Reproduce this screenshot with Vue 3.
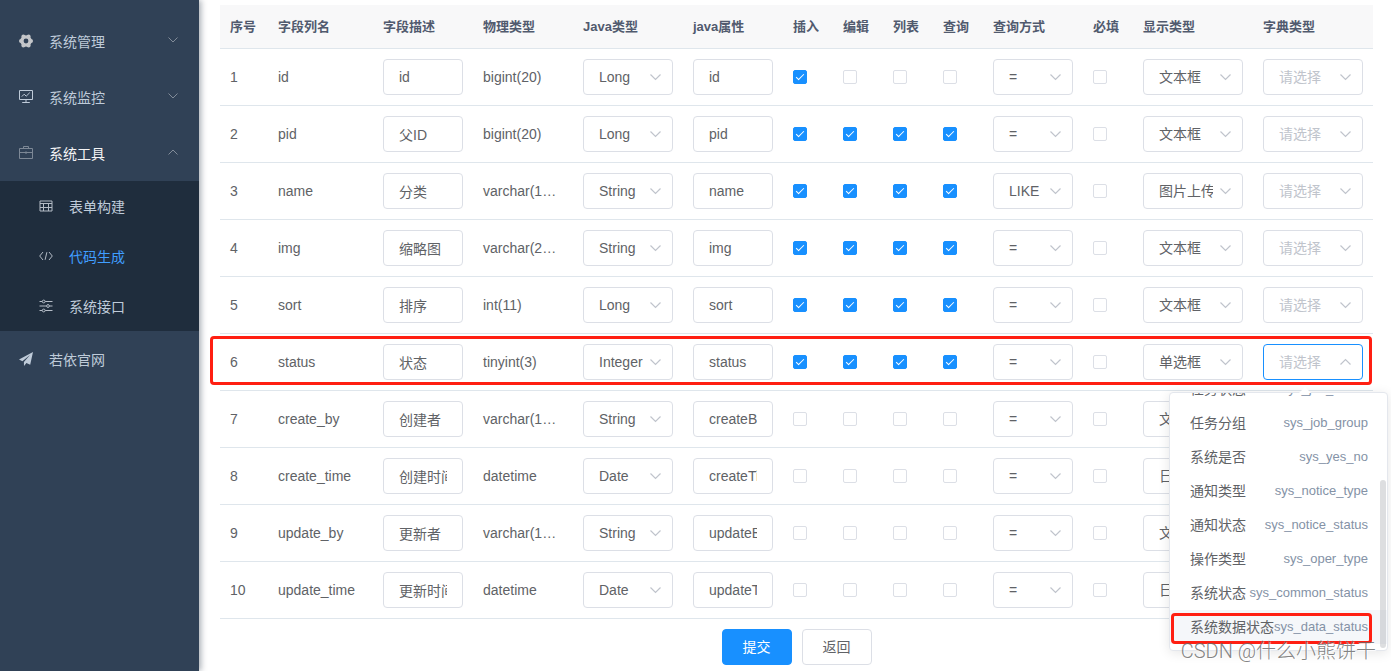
<script setup>
import { ref } from 'vue'

const headers = ['序号', '字段列名', '字段描述', '物理类型', 'Java类型', 'java属性', '插入', '编辑', '列表', '查询', '查询方式', '必填', '显示类型', '字典类型']
const columnClasses = ['c-48', 'c-105', 'c-100', 'c-100', 'c-110', 'c-100', 'c-50', 'c-50', 'c-50', 'c-50', 'c-100', 'c-50', 'c-120', 'c-120']
const flagNames = ['插入', '编辑', '列表', '查询']
const javaTypes = ['Long', 'String', 'Integer', 'Date']
const queryTypes = ['=', 'LIKE']
const htmlTypes = ['文本框', '单选框', '图片上传', '日期控件']

const all = () => [true, true, true, true]
const none = () => [false, false, false, false]

const rows = ref([
  { name: 'id', comment: 'id', type: 'bigint(20)', java: 'Long', field: 'id', flags: [true, false, false, false], query: '=', required: false, html: '文本框', dict: '' },
  { name: 'pid', comment: '父ID', type: 'bigint(20)', java: 'Long', field: 'pid', flags: all(), query: '=', required: false, html: '文本框', dict: '' },
  { name: 'name', comment: '分类', type: 'varchar(1…', java: 'String', field: 'name', flags: all(), query: 'LIKE', required: false, html: '图片上传', dict: '' },
  { name: 'img', comment: '缩略图', type: 'varchar(2…', java: 'String', field: 'img', flags: all(), query: '=', required: false, html: '文本框', dict: '' },
  { name: 'sort', comment: '排序', type: 'int(11)', java: 'Long', field: 'sort', flags: all(), query: '=', required: false, html: '文本框', dict: '' },
  { name: 'status', comment: '状态', type: 'tinyint(3)', java: 'Integer', field: 'status', flags: all(), query: '=', required: false, html: '单选框', dict: '' },
  { name: 'create_by', comment: '创建者', type: 'varchar(1…', java: 'String', field: 'createBy', flags: none(), query: '=', required: false, html: '文本框', dict: '' },
  { name: 'create_time', comment: '创建时间', type: 'datetime', java: 'Date', field: 'createTime', flags: none(), query: '=', required: false, html: '日期控件', dict: '' },
  { name: 'update_by', comment: '更新者', type: 'varchar(1…', java: 'String', field: 'updateBy', flags: none(), query: '=', required: false, html: '文本框', dict: '' },
  { name: 'update_time', comment: '更新时间', type: 'datetime', java: 'Date', field: 'updateTime', flags: none(), query: '=', required: false, html: '日期控件', dict: '' }
])

const dicts = [
  { label: '任务状态', value: 'sys_job_status' },
  { label: '任务分组', value: 'sys_job_group' },
  { label: '系统是否', value: 'sys_yes_no' },
  { label: '通知类型', value: 'sys_notice_type' },
  { label: '通知状态', value: 'sys_notice_status' },
  { label: '操作类型', value: 'sys_oper_type' },
  { label: '系统状态', value: 'sys_common_status' },
  { label: '系统数据状态', value: 'sys_data_status' }
]
const openRow = 5
const hovered = 'sys_data_status'
</script>

<template>
  <div class="page">
    <nav class="sidebar" aria-label="主菜单">
      <button type="button" class="item">
        <svg class="icon gear" viewBox="0 0 14 14" aria-hidden="true">
          <circle cx="7" cy="7" r="4.1" fill="none" stroke="currentColor" stroke-width="3.4" />
          <g fill="currentColor">
            <circle cx="12" cy="7" r="2" /><circle cx="2" cy="7" r="2" />
            <circle cx="9.6" cy="2.4" r="2" /><circle cx="4.4" cy="2.4" r="2" />
            <circle cx="9.6" cy="11.6" r="2" /><circle cx="4.4" cy="11.6" r="2" />
          </g>
        </svg>
        <span class="label">系统管理</span>
        <svg class="caret" viewBox="0 0 10 6" aria-hidden="true"><path d="M.5.5 5 5 9.5.5" /></svg>
      </button>
      <button type="button" class="item">
        <svg class="icon line" viewBox="0 0 14 14" aria-hidden="true">
          <path d="M.5.5h13v9H.5zM7 9.5v3.5M3.2 12.5h7.6M2.8 6.6l2.4-2.4 2 2 3.6-3.6" />
        </svg>
        <span class="label">系统监控</span>
        <svg class="caret" viewBox="0 0 10 6" aria-hidden="true"><path d="M.5.5 5 5 9.5.5" /></svg>
      </button>
      <button type="button" class="item opened" aria-expanded="true">
        <svg class="icon line dim" viewBox="0 0 14 14" aria-hidden="true">
          <path d="M.5 2.5h13v10H.5zM4.5 2.5v-2h5v2M.5 6.5h13M7 5.3v2.7" />
        </svg>
        <span class="label">系统工具</span>
        <svg class="caret" viewBox="0 0 10 6" aria-hidden="true"><path d="M.5 5.5 5 1 9.5 5.5" /></svg>
      </button>
      <div class="submenu">
        <a href="#build" class="item sub">
          <svg class="icon line" viewBox="0 0 14 14" aria-hidden="true">
            <path d="M1 2h12v10H1zM1 4.5h12M1 8.5h12M4.5 4.5v7.5M9.5 4.5v7.5" />
          </svg>
          <span class="label">表单构建</span>
        </a>
        <a href="#gen" class="item sub current">
          <svg class="icon line" viewBox="0 0 14 14" aria-hidden="true">
            <path d="M4 3 .7 7 4 11M10 3l3.3 4L10 11M7.9 3.2 6.1 10.8" />
          </svg>
          <span class="label">代码生成</span>
        </a>
        <a href="#swagger" class="item sub">
          <svg class="icon line" viewBox="0 0 14 14" aria-hidden="true">
            <path d="M.5 2.5h2.7M6.2 2.5h7.3M.5 7h7M10.5 7h3M.5 11.5h2.7M6.2 11.5h7.3" />
            <circle cx="4.7" cy="2.5" r="1.4" /><circle cx="9" cy="7" r="1.4" /><circle cx="4.7" cy="11.5" r="1.4" />
          </svg>
          <span class="label">系统接口</span>
        </a>
      </div>
      <a href="#site" class="item">
        <svg class="icon" viewBox="0 0 14 14" aria-hidden="true">
          <path fill="currentColor" d="M14 0 0 7.6l3.4 1.6L11 3 4.9 9.9 5 14l2.4-2.9 3.8 1.7z" />
        </svg>
        <span class="label">若依官网</span>
      </a>
    </nav>

    <main class="main">
      <table class="grid">
        <colgroup>
          <col v-for="(c, i) in columnClasses" :key="i" :class="c" />
        </colgroup>
        <thead>
          <tr>
            <th v-for="h in headers" :key="h" scope="col">{{ h }}</th>
          </tr>
        </thead>
        <tbody>
          <tr v-for="(row, r) in rows" :key="row.name">
            <td>{{ r + 1 }}<span v-if="r === openRow" class="row-mark"></span></td>
            <td>{{ row.name }}</td>
            <td><input v-model="row.comment" class="field" type="text" aria-label="字段描述" /></td>
            <td class="nowrap">{{ row.type }}</td>
            <td>
              <div class="picker">
                <select v-model="row.java" class="field" aria-label="Java类型">
                  <option v-for="o in javaTypes" :key="o">{{ o }}</option>
                </select>
                <svg class="arrow" viewBox="0 0 11 8" aria-hidden="true"><path d="M.5 1.5 5.5 6.5 10.5 1.5" /></svg>
              </div>
            </td>
            <td><input v-model="row.field" class="field" type="text" aria-label="java属性" /></td>
            <td v-for="(f, i) in flagNames" :key="f">
              <input v-model="row.flags[i]" class="check" type="checkbox" :aria-label="f" />
            </td>
            <td>
              <div class="picker">
                <select v-model="row.query" class="field" aria-label="查询方式">
                  <option v-for="o in queryTypes" :key="o">{{ o }}</option>
                </select>
                <svg class="arrow" viewBox="0 0 11 8" aria-hidden="true"><path d="M.5 1.5 5.5 6.5 10.5 1.5" /></svg>
              </div>
            </td>
            <td><input v-model="row.required" class="check" type="checkbox" aria-label="必填" /></td>
            <td>
              <div class="picker">
                <select v-model="row.html" class="field" aria-label="显示类型">
                  <option v-for="o in htmlTypes" :key="o">{{ o }}</option>
                </select>
                <svg class="arrow" viewBox="0 0 11 8" aria-hidden="true"><path d="M.5 1.5 5.5 6.5 10.5 1.5" /></svg>
              </div>
            </td>
            <td>
              <div class="picker">
                <select v-model="row.dict" class="field empty" :class="{ focused: r === openRow }" aria-label="字典类型">
                  <option value="">请选择</option>
                  <option v-for="d in dicts" :key="d.value" :value="d.value">{{ d.label }}</option>
                </select>
                <svg class="arrow" viewBox="0 0 11 8" aria-hidden="true">
                  <path :d="r === openRow ? 'M.5 6.5 5.5 1.5 10.5 6.5' : 'M.5 1.5 5.5 6.5 10.5 1.5'" />
                </svg>
                <div v-if="r === openRow" class="dropdown">
                  <ul class="options" role="listbox" aria-label="字典类型">
                    <li v-for="d in dicts" :key="d.value" class="option" :class="{ hover: d.value === hovered }" role="option">
                      <span>{{ d.label }}</span>
                      <span class="code">{{ d.value }}</span>
                      <span v-if="d.value === hovered" class="option-mark"></span>
                    </li>
                  </ul>
                  <span class="thumb"></span>
                </div>
              </div>
            </td>
          </tr>
        </tbody>
      </table>
      <div class="actions">
        <button type="button" class="btn primary">提交</button>
        <button type="button" class="btn">返回</button>
      </div>
    </main>
    <div class="watermark">CSDN @什么小熊饼干</div>
  </div>
</template>

<style>
body {
  margin: 0;
  background: #fff;
}
</style>

<style scoped>
.page {
  position: relative;
  display: flex;
  min-height: 100vh;
  font-family: "Liberation Sans", "Noto Sans CJK SC", sans-serif;
  font-size: 14px;
  color: #606266;
}
.page *,
.page *::before,
.page *::after {
  box-sizing: border-box;
}

.sidebar {
  flex: none;
  width: 199px;
  padding-top: 13px;
  background: #304156;
  box-shadow: 2px 0 6px rgba(0, 21, 41, 0.35);
}
.item {
  display: flex;
  align-items: center;
  width: 100%;
  height: 56px;
  padding: 0 21px 0 19px;
  border: 0;
  background: none;
  color: #bfcbd9;
  font: inherit;
  text-align: left;
  text-decoration: none;
}
.item.opened .label {
  color: #f4f4f5;
}
.submenu {
  background: #1f2d3d;
}
.item.sub {
  height: 50px;
  padding-left: 39px;
}
.item.current .label {
  color: #409eff;
}
.icon {
  flex: none;
  width: 14px;
  height: 14px;
  margin-right: 16px;
}
.icon.gear {
  color: #c4c6c9;
}
.icon.line {
  fill: none;
  stroke: currentColor;
  stroke-width: 1;
}
.item .icon.dim {
  color: #7d8896;
}
.item.sub .icon.line {
  color: #b4bcc6;
}
.label {
  flex: 1;
}
.caret {
  width: 10px;
  height: 6px;
  margin-bottom: 3px;
  fill: none;
  stroke: #828c99;
}

.main {
  flex: 1;
  min-width: 0;
  padding: 5px 18px 6px 21px;
}
.grid {
  width: 100%;
  table-layout: fixed;
  border-collapse: separate;
  border-spacing: 0;
}
.c-48 { width: 48px; }
.c-50 { width: 50px; }
.c-100 { width: 100px; }
.c-105 { width: 105px; }
.c-110 { width: 110px; }
.c-120 { width: 120px; }
th {
  height: 44px;
  padding: 0 10px 2px;
  border-bottom: 1px solid #dfe6ec;
  background: #f8f8f9;
  color: #515a6e;
  font-size: 13px;
  text-align: left;
  white-space: nowrap;
}
tbody tr {
  position: relative;
}
td {
  height: 57px;
  padding: 10px;
  border-bottom: 1px solid #dfe6ec;
  white-space: nowrap;
}
td.nowrap {
  overflow: hidden;
  text-overflow: ellipsis;
}
.field {
  display: block;
  width: 100%;
  height: 36px;
  padding: 0 15px;
  border: 1px solid #dcdfe6;
  border-radius: 4px;
  background: #fff;
  color: #606266;
  font: inherit;
  outline: none;
  appearance: none;
}
select.field {
  padding-right: 29px;
}
.field.empty {
  color: #c0c4cc;
}
.field.focused {
  border-color: #1890ff;
}
.picker {
  position: relative;
}
.arrow {
  position: absolute;
  top: 14px;
  right: 12px;
  width: 11px;
  height: 8px;
  fill: none;
  stroke: #c0c4cc;
  stroke-width: 1.2;
  pointer-events: none;
}
.check {
  display: block;
  width: 14px;
  height: 14px;
  margin: 0;
  border: 1px solid #dcdfe6;
  border-radius: 2px;
  background: #fff;
  appearance: none;
}
.check:checked {
  border-color: #1890ff;
  background: #1890ff;
}
.check:checked::after {
  content: "";
  display: block;
  width: 4px;
  height: 8px;
  margin: 1px 0 0 4px;
  border: solid #fff;
  border-width: 0 1px 1px 0;
  transform: rotate(45deg);
}

.row-mark,
.option-mark {
  position: absolute;
  border: 3px solid #ff1f12;
  border-radius: 4px;
  pointer-events: none;
}
.row-mark {
  z-index: 1;
  top: 2px;
  right: 1px;
  left: -10px;
  height: 49px;
}
.option-mark {
  top: 3px;
  right: 15px;
  bottom: 0;
  left: 1px;
}

.dropdown {
  position: absolute;
  z-index: 2;
  top: 48px;
  right: -25px;
  width: 219px;
  border: 1px solid #e4e7ed;
  border-radius: 4px;
  background: #fff;
  box-shadow: 0 2px 12px rgba(0, 0, 0, 0.1);
}
.dropdown::before {
  content: "";
  position: absolute;
  top: -6px;
  left: 129px;
  border: 6px solid transparent;
  border-top: 0;
  border-bottom-color: #fff;
}
.options {
  display: flex;
  flex-direction: column;
  justify-content: flex-end;
  height: 257px;
  margin: 0;
  padding: 0 0 6px;
  overflow: hidden;
  list-style: none;
}
.option {
  position: relative;
  display: flex;
  flex: none;
  align-items: center;
  justify-content: space-between;
  height: 34px;
  padding: 0 19px 2px 20px;
}
.option.hover {
  background: #f5f7fa;
}
.code {
  color: #8492a6;
  font-size: 13px;
}
.thumb {
  position: absolute;
  right: 1px;
  bottom: 2px;
  width: 6px;
  height: 168px;
  border-radius: 3px;
  background: rgba(144, 147, 153, 0.3);
}

.actions {
  display: flex;
  justify-content: center;
  gap: 10px;
  padding-top: 10px;
}
.btn {
  height: 36px;
  padding: 0 20px 2px;
  border: 1px solid #dcdfe6;
  border-radius: 4px;
  background: #fff;
  color: #606266;
  font: inherit;
}
.btn.primary {
  border-color: #1890ff;
  background: #1890ff;
  color: #fff;
}
.watermark {
  position: absolute;
  z-index: 3;
  right: 15px;
  bottom: 6px;
  color: rgba(100, 100, 100, 0.8);
  font-family: Roboto, "Noto Sans CJK SC", sans-serif;
  font-size: 20px;
  font-weight: 300;
  line-height: 28px;
  text-shadow: 1px 1px 1px #fff;
  white-space: nowrap;
  pointer-events: none;
}
</style>
